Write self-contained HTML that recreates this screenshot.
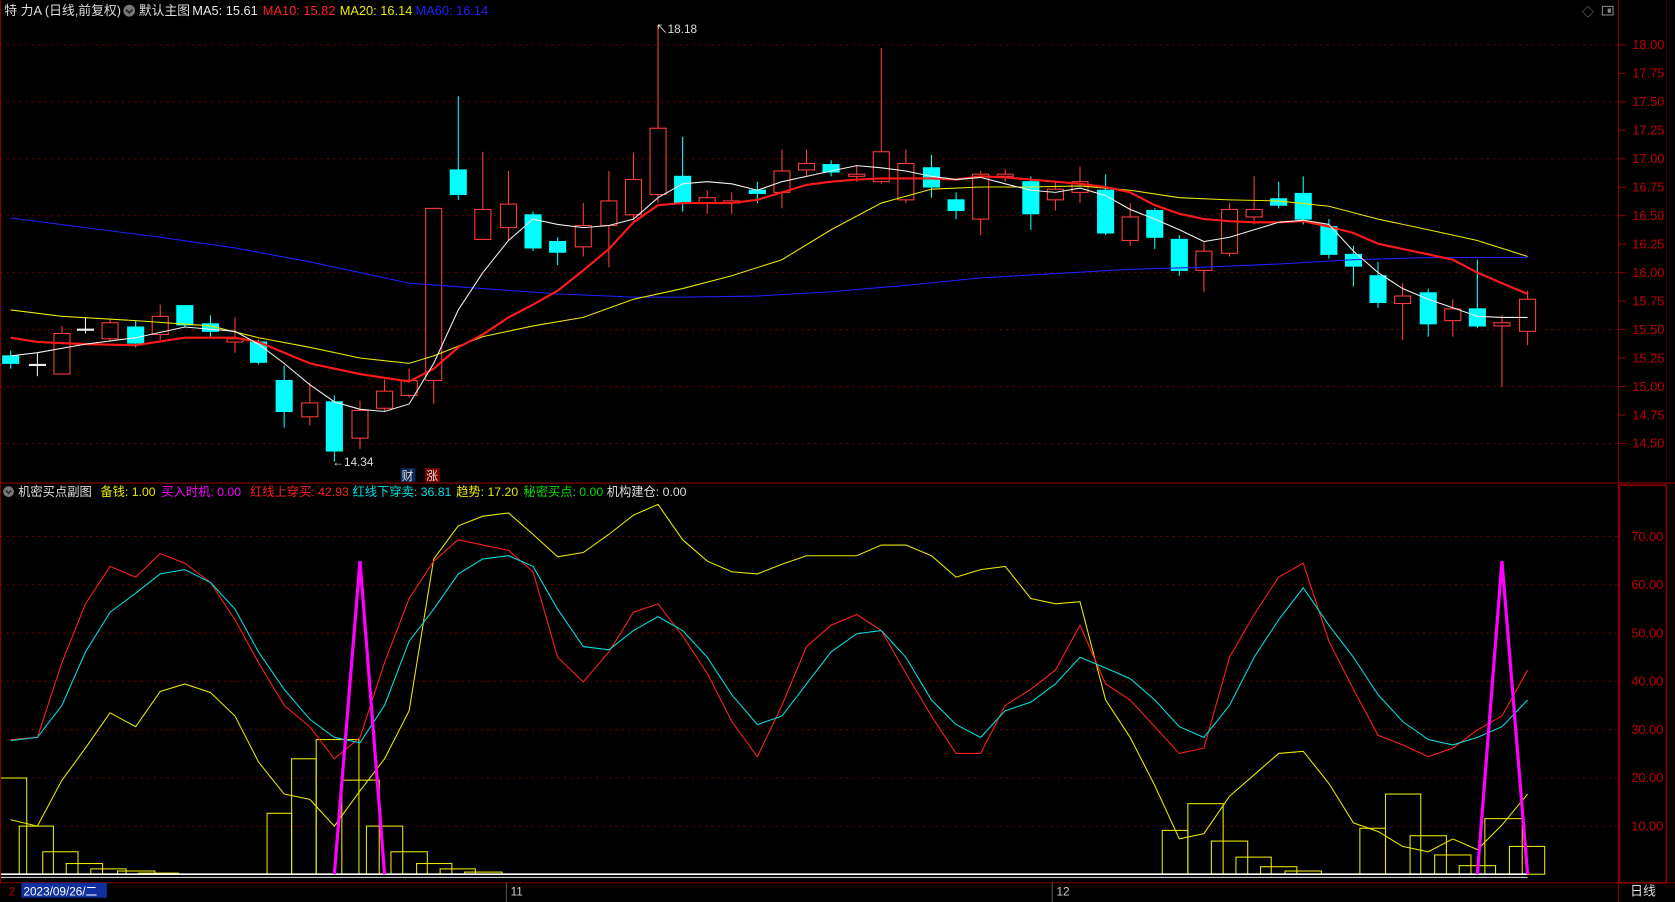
<!DOCTYPE html>
<html><head><meta charset="utf-8"><style>
html,body{margin:0;padding:0;background:#000;overflow:hidden}
svg{display:block}
text{font-family:"Liberation Sans","Noto Sans CJK SC",sans-serif}
</style></head><body>
<svg id="s" width="1675" height="902" viewBox="0 0 1568 844" preserveAspectRatio="none" xmlns="http://www.w3.org/2000/svg">
<rect width="1568" height="844" fill="#000"/>
<g id="grid"></g>
<g id="c"></g>
<!-- borders -->
<line x1="0.5" y1="0" x2="0.5" y2="826" stroke="#8b0000"/>
<line x1="1515" y1="0" x2="1515" y2="844" stroke="#8b0000"/>
<line x1="0" y1="452" x2="1568" y2="452" stroke="#8b0000"/>
<line x1="0" y1="826" x2="1568" y2="826" stroke="#8b0000"/>
<rect x="1516" y="454" width="44" height="372" fill="none" stroke="#8b0000" stroke-width="1.5"/>
<line x1="1560" y1="0" x2="1560" y2="454" stroke="#400000"/>
<!-- header -->
<text x="4" y="14" font-size="12" fill="#ddd">特 力A (日线,前复权)</text>
<circle cx="121" cy="10" r="5.5" fill="#777"/><path d="M118 9 l3 3 l3 -3" stroke="#222" stroke-width="1.5" fill="none"/>
<text x="130" y="14" font-size="12" fill="#ddd">默认主图</text>
<text x="180" y="14" font-size="12" fill="#e8e8e8">MA5: 15.61</text>
<text x="246" y="14" font-size="12" fill="#ff2020">MA10: 15.82</text>
<text x="318" y="14" font-size="12" fill="#e8e800">MA20: 16.14</text>
<text x="389" y="14" font-size="12" fill="#2020ff">MA60: 16.14</text>
<text x="1481" y="15" font-size="11" fill="#888">◇</text>
<rect x="1500" y="6" width="10" height="8" fill="none" stroke="#888"/><rect x="1505" y="8" width="3" height="4" fill="#888"/>
<!-- annotations -->
<text x="614" y="31" font-size="11" fill="#ddd">↖18.18</text>
<text x="311" y="436" font-size="11" fill="#ddd">←14.34</text>
<rect x="375" y="438" width="14" height="13" fill="#0a2a55"/><text x="376" y="449" font-size="11" fill="#ddd">财</text>
<rect x="398" y="438" width="14" height="13" fill="#7a0000"/><text x="399" y="449" font-size="11" fill="#ddd">涨</text>
<!-- sub header -->
<circle cx="8" cy="460" r="5" fill="#777"/><path d="M5.5 459 l2.5 2.5 l2.5 -2.5" stroke="#222" stroke-width="1.3" fill="none"/>
<g font-size="11.5">
<text x="17" y="464" fill="#ddd">机密买点副图</text>
<text x="94" y="464" fill="#e8e800">备钱: 1.00</text>
<text x="151" y="464" fill="#ff00ff">买入时机: 0.00</text>
<text x="234" y="464" fill="#ff2020">红线上穿买: 42.93</text>
<text x="330" y="464" fill="#00e0e0">红线下穿卖: 36.81</text>
<text x="427" y="464" fill="#e8e800">趋势: 17.20</text>
<text x="490" y="464" fill="#00e000">秘密买点: 0.00</text>
<text x="568" y="464" fill="#ddd">机构建仓: 0.00</text>
</g>
<!-- bottom -->
<rect x="20" y="826" width="80" height="14" fill="#1030a0"/>
<text x="8" y="838" font-size="11" fill="#b00">2</text>
<text x="22" y="838" font-size="11" fill="#fff">2023/09/26/二</text>
<line x1="474" y1="826" x2="474" y2="844" stroke="#555"/><text x="478" y="838" font-size="11" fill="#ccc">11</text>
<line x1="985" y1="826" x2="985" y2="844" stroke="#555"/><text x="989" y="838" font-size="11" fill="#ccc">12</text>
<text x="1526" y="838" font-size="12" fill="#ddd">日线</text>
</svg>
<script>
var NS="http://www.w3.org/2000/svg",g=document.getElementById('c'),gr=document.getElementById('grid');
function el(p,t,a){var e=document.createElementNS(NS,t);for(var k in a)e.setAttribute(k,a[k]);p.appendChild(e);return e;}
// price grid
for(var i=0;i<15;i++){var p=18-i*0.25,y=42+i*26.64;
 if(i%2==0) el(gr,'line',{x1:0,y1:y,x2:1515,y2:y,stroke:'#6a0000','stroke-dasharray':'2,4'});
 el(gr,'line',{x1:1515,y1:y,x2:1522,y2:y,stroke:'#8b0000'});
 var t=el(gr,'text',{x:1528,y:y+4,'font-size':12,fill:'#c00000'});t.textContent=p.toFixed(2);}
for(var v=70;v>=10;v-=10){var y=502+(70-v)*4.517;
 el(gr,'line',{x1:0,y1:y,x2:1515,y2:y,stroke:'#6a0000','stroke-dasharray':'2,4'});
 var t=el(gr,'text',{x:1527,y:y+4,'font-size':12,fill:'#c00000'});t.textContent=v.toFixed(2);}
// candles: x, top, bottom, hi, lo, type(r/c/w)
var C=[[10,333,340,328,345,'c'],[35,341,342,330,352,'w'],[58,312,350,305,350,'r'],[80,308,309,297,312,'w'],[103,302,317,298,320,'r'],[127,306,321,300,325,'c'],[150,296,313,285,318,'r'],[173,286,304,286,306,'c'],[197,303,310,295,315,'c'],[220,317,320,297,330,'r'],[242,320,339,318,341,'c'],[266,356,385,342,400,'c'],[290,377,390,358,398,'r'],[313,376,422,370,432,'c'],[337,384,410,375,420,'r'],[360,366,382,355,385,'r'],[383,356,370,345,372,'r'],[406,195,356,195,378,'r'],[429,159,182,90,187,'c'],[452,196,224,142,224,'r'],[476,191,213,160,225,'r'],[499,201,232,198,235,'c'],[522,226,236,222,248,'c'],[546,211,231,190,240,'r'],[570,188,211,160,250,'r'],[593,168,201,143,205,'r'],[616,120,182,23,190,'r'],[639,165,190,128,198,'c'],[662,185,190,178,200,'r'],[685,188,190,180,200,'r'],[709,178,181,170,190,'c'],[732,160,180,140,195,'r'],[755,153,159,140,165,'r'],[778,154,161,150,165,'c'],[802,163,165,155,170,'r'],[825,142,170,45,172,'r'],[848,153,187,140,190,'r'],[872,157,175,145,185,'c'],[895,187,197,180,205,'c'],[918,163,205,160,220,'r'],[941,163,165,158,170,'r'],[965,170,200,165,215,'c'],[988,177,187,170,197,'r'],[1011,170,180,156,190,'r'],[1035,178,218,163,220,'c'],[1058,203,225,190,230,'r'],[1081,197,222,195,233,'c'],[1104,224,253,220,258,'c'],[1127,235,253,227,273,'r'],[1151,196,237,190,240,'r'],[1174,196,203,165,210,'r'],[1197,186,192,170,195,'c'],[1220,181,205,165,210,'c'],[1244,212,238,205,242,'c'],[1267,238,249,230,268,'c'],[1290,258,283,245,288,'c'],[1313,277,284,265,318,'r'],[1337,274,303,270,315,'c'],[1360,289,300,280,315,'r'],[1383,289,305,243,307,'c'],[1406,302,305,295,362,'r'],[1430,280,310,272,323,'r']];
C.forEach(function(c){var col=c[5]=='r'?'#ff3c3c':c[5]=='c'?'#00ffff':'#eee';
 el(g,'line',{x1:c[0],y1:c[3],x2:c[0],y2:c[4],stroke:col});
 var h=Math.max(c[2]-c[1],1);
 el(g,'rect',{x:c[0]-7.5,y:c[1],width:15,height:h,fill:c[5]=='c'?'#00ffff':'#000',stroke:col});});
function pl(pts,col,w){el(g,'polyline',{points:pts,fill:'none',stroke:col,'stroke-width':w||1});}
pl("10,204 80,213 150,222 220,232 290,245 360,260 383,265 452,270 522,275 593,278 639,278 709,277 778,273 848,267 918,260 988,256 1058,252 1127,250 1197,247 1267,243 1337,241 1430,241",'#2020ff');
pl("10,290 58,296 127,300 197,305 242,316 290,325 337,335 383,340 406,333 452,315 499,305 546,297 593,280 639,270 685,258 732,243 778,215 825,190 872,177 918,175 965,175 1011,174 1058,178 1104,185 1151,187 1197,188 1244,193 1290,205 1337,215 1383,225 1430,240",'#e8e800');
pl("10,316 35,320 80,322 127,323 173,316 220,316 242,320 290,340 337,350 383,357 406,345 429,325 452,313 476,297 499,285 522,272 546,253 570,233 593,208 616,192 639,190 662,190 685,190 709,187 732,180 755,173 778,170 802,168 825,167 848,167 872,167 895,168 918,165 941,166 965,168 988,170 1011,172 1035,175 1058,180 1081,192 1104,200 1127,205 1151,207 1174,208 1197,208 1220,207 1244,212 1267,218 1290,228 1313,233 1337,238 1360,243 1383,255 1406,265 1430,275",'#ff1a1a',2);
pl("10,333 35,330 80,322 127,316 173,306 220,310 242,322 266,340 290,360 313,376 337,383 360,385 383,378 406,340 429,290 452,255 476,225 499,205 522,210 546,213 570,211 593,205 616,185 639,172 662,170 685,172 709,178 732,170 755,165 778,160 802,155 825,157 848,160 872,165 895,168 918,166 941,172 965,178 988,180 1011,176 1035,183 1058,196 1081,205 1104,215 1127,226 1151,222 1174,215 1197,208 1220,206 1244,210 1267,235 1290,255 1313,270 1337,280 1360,288 1383,296 1406,297 1430,297",'#f0f0f0');
// sub chart boxes
var B=[[0,25,728],[18,50,773],[40,73,797],[62,96,808],[85,118,813],[110,145,815],[130,167,817],[250,273,761],[273,296,710],[296,336,692],[320,355,730],[343,377,773],[366,400,797],[390,423,808],[412,445,813],[435,470,816],[1088,1112,777],[1112,1145,752],[1134,1168,787],[1157,1190,802],[1180,1214,811],[1203,1237,815],[1273,1297,775],[1297,1330,743],[1320,1354,782],[1343,1377,800],[1366,1400,810],[1390,1425,766],[1413,1446,792]];
B.forEach(function(b){el(g,'rect',{x:b[0],y:b[2],width:b[1]-b[0],height:818-b[2],fill:'none',stroke:'#e8e800'});});
el(g,'line',{x1:0,y1:818,x2:1430,y2:818,stroke:'#fff','stroke-width':1.5});
el(g,'line',{x1:0,y1:821,x2:1430,y2:821,stroke:'#ccc'});
pl("10,767 35,773 58,730 80,700 103,667 127,680 150,647 173,640 197,648 220,670 242,713 266,743 290,748 313,773 337,740 360,710 383,665 406,523 429,492 452,483 476,480 499,500 522,521 546,517 570,500 593,482 616,472 639,505 662,525 685,535 709,537 732,528 755,520 778,520 802,520 825,510 848,510 872,520 895,540 918,533 941,530 965,560 988,565 1011,563 1035,655 1058,690 1081,735 1104,785 1127,780 1151,745 1174,725 1197,705 1220,703 1244,733 1267,770 1290,778 1313,792 1337,797 1360,785 1383,795 1406,772 1430,743",'#e8e800');
pl("10,692 35,690 58,620 80,565 103,530 127,540 150,518 173,527 197,545 220,580 242,620 266,660 290,680 313,710 337,690 360,620 383,560 406,525 429,505 452,510 476,515 499,535 522,615 546,638 570,610 593,573 616,565 639,595 662,630 685,675 709,708 732,660 755,605 778,585 802,575 825,590 848,630 872,670 895,705 918,705 941,660 965,645 988,627 1011,585 1035,640 1058,655 1081,680 1104,705 1127,700 1151,615 1174,575 1197,540 1220,527 1244,600 1267,645 1290,688 1313,697 1337,708 1360,700 1383,683 1406,670 1430,627",'#ff2020');
pl("10,693 35,690 58,660 80,610 103,573 127,555 150,537 173,533 197,545 220,570 242,610 266,645 290,673 313,690 337,695 360,660 383,600 406,570 429,537 452,523 476,520 499,530 522,570 546,605 570,608 593,590 616,577 639,590 662,615 685,650 709,678 732,670 755,640 778,610 802,593 825,590 848,615 872,655 895,678 918,690 941,665 965,657 988,640 1011,615 1035,625 1058,635 1081,655 1104,680 1127,690 1151,660 1174,615 1197,580 1220,550 1244,585 1267,615 1290,650 1313,675 1337,692 1360,697 1383,690 1406,680 1430,655",'#00e0e0');
pl("313,818 337,525 360,818",'#ff00ff',3);
pl("1383,818 1406,525 1430,818",'#ff00ff',3);
</script>
</body></html>
